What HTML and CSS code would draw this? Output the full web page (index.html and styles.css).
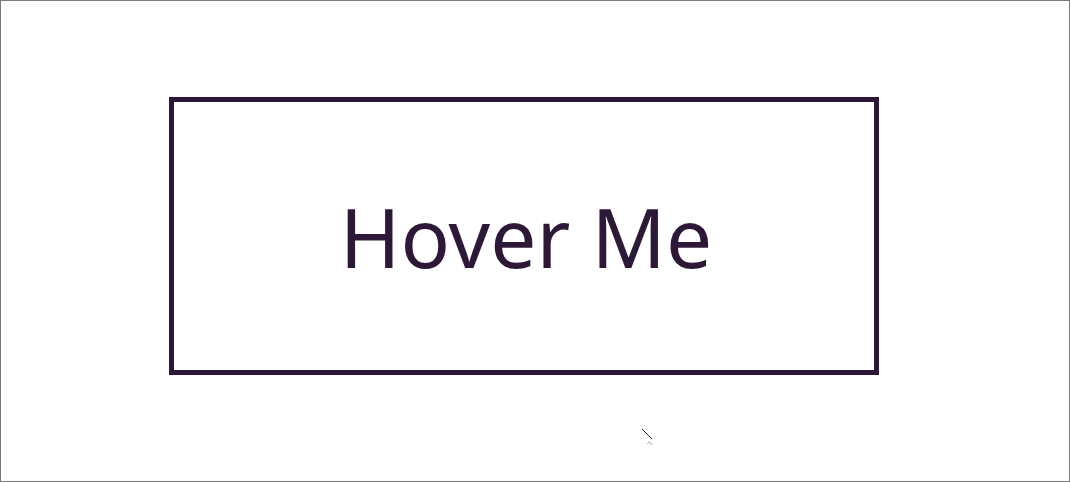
FILE: index.html
```html
<!DOCTYPE html>
<html>
<head>
<meta charset="utf-8">
<link rel="stylesheet" href="styles.css">
</head>
<body>
<div class="frame">
  <button class="hover-box">Hover Me</button>
  <svg class="cursor" width="14" height="20" viewBox="0 0 14 20">
    <path d="M1 1 L11 11" stroke="#222" stroke-width="1" fill="none"/>
    <path d="M6 16 L8 14 L10 15 L11 17" stroke="#aaa" stroke-width="1" fill="none"/>
  </svg>
</div>
</body>
</html>
```
FILE: styles.css
```css
html, body {
  margin: 0;
  padding: 0;
  background: #fff;
}
.frame {
  position: relative;
  box-sizing: border-box;
  width: 1070px;
  height: 482px;
  border: 1px solid #7a7a7a;
  padding: 96px 0 0 168px;
}
.hover-box {
  display: flex;
  align-items: center;
  justify-content: center;
  box-sizing: border-box;
  width: 710px;
  height: 278px;
  border: 5px solid #2d1837;
  background: #fff;
  color: #2d1837;
  font-family: "Noto Sans", "Open Sans", sans-serif;
  font-size: 82px;
  padding: 0 0 0 4px;
  margin: 0;
  cursor: pointer;
}
.cursor {
  position: absolute;
  left: 640px;
  top: 427px;
}
```
